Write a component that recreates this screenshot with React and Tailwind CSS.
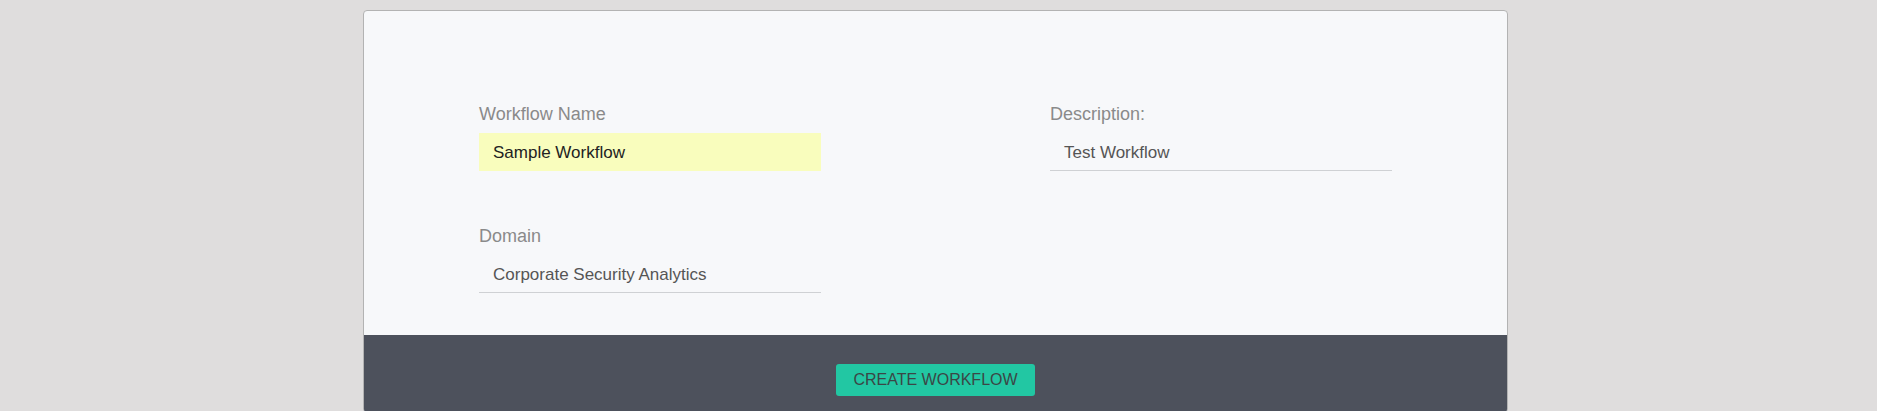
import React from "react";

function Field({ label, value, highlight, className = "" }) {
  return (
    <div className={"w-[342px] flex flex-col " + className}>
      <label className="text-[18px] leading-[21px] text-[#8a8a8a]">{label}</label>
      <div
        className={
          "mt-[8px] h-[38px] flex items-center pl-[14px] pt-[2px] text-[17px] " +
          (highlight
            ? "bg-[#f9fdbd] text-[#222222]"
            : "border-b border-[#cfd1d4] text-[#555555]")
        }
      >
        {value}
      </div>
    </div>
  );
}

export default function App() {
  return (
    <div
      className="w-[1877px] h-[411px] bg-[#dfdddd] overflow-hidden pt-[10px]"
      style={{ fontFamily: '"Liberation Sans", Arial, sans-serif' }}
    >
      <div className="w-[1145px] ml-[363px] border border-[#b3b3b3] rounded-[4px] bg-[#f7f8fa] overflow-hidden">
        <div className="pt-[93px] pb-[42px] px-[115px]">
          <div className="flex justify-between">
            <Field label="Workflow Name" value="Sample Workflow" highlight />
            <Field label="Description:" value="Test Workflow" />
          </div>
          <div className="flex mt-[55px]">
            <Field label="Domain" value="Corporate Security Analytics" />
          </div>
        </div>
        <div className="bg-[#4d515c] flex justify-center pt-[29px] pb-[16px]">
          <button className="h-[32px] w-[199px] rounded-[3px] bg-[#22c7a3] text-[#3b4646] text-[16px] uppercase">
            Create Workflow
          </button>
        </div>
      </div>
    </div>
  );
}
